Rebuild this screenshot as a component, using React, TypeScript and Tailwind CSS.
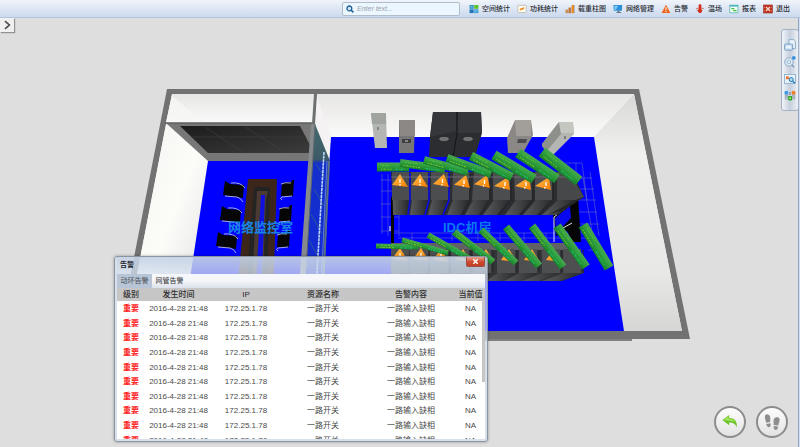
import type { ReactNode } from "react";

type Pt = [number, number];

/* ---------- toolbar icons ---------- */

const SpaceIcon = () => (
  <svg viewBox="0 0 10 10" className="size-[10px]" aria-hidden="true">
    <rect x="0.5" y="1" width="4.2" height="3.8" fill="#2d8fc0" />
    <rect x="5.2" y="1" width="4.2" height="3.8" fill="#5cc22c" />
    <rect x="0.5" y="5.3" width="4.2" height="3.8" fill="#2577b8" />
    <rect x="5.2" y="5.3" width="4.2" height="3.8" fill="#3d9bd0" />
    <rect x="1.5" y="2" width="2" height="1.6" fill="#6fc4d8" />
    <rect x="6.2" y="6.3" width="2" height="1.6" fill="#74c4e8" />
  </svg>
);

const PowerIcon = () => (
  <svg viewBox="0 0 10 10" className="size-[10px]" aria-hidden="true">
    <rect x="0.8" y="1.3" width="8.4" height="7.2" rx="0.8" fill="#fffdf4" stroke="#b9b7a8" strokeWidth="0.8" />
    <path d="M2.8 6.2 4.4 4.6 5.2 5.4 7.2 3.6" fill="none" stroke="#f08a1c" strokeWidth="1.3" />
  </svg>
);

const BarsIcon = () => (
  <svg viewBox="0 0 10 10" className="size-[10px]" aria-hidden="true">
    <rect x="0.5" y="5.6" width="2.3" height="3.6" fill="#d98a3c" />
    <rect x="3.5" y="3.6" width="2.4" height="5.6" fill="#c9742c" />
    <rect x="6.6" y="1" width="2.5" height="8.2" fill="#f08a1c" />
    <path d="M2.8 5.6v3.6M5.9 3.6v5.6M9.2 1v8.2" stroke="#7f8a96" strokeWidth="0.6" />
  </svg>
);

const MonitorIcon = () => (
  <svg viewBox="0 0 10 10" className="size-[10px]" aria-hidden="true">
    <path d="M0.4 1h8.8l-0.4 5.8H0.8z" fill="#2a8fd8" />
    <path d="M1.2 1.7h4L2.8 6H1.5z" fill="#7cc8f4" />
    <path d="M4.4 6.8h2.2v1.3h1.6v1H3.4v-1h1z" fill="#6d7c8c" />
  </svg>
);

const AlarmIcon = () => (
  <svg viewBox="0 0 10 10" className="size-[10px]" aria-hidden="true">
    <path d="M5 0.8 9.4 9H0.6z" fill="#f0641c" />
    <path d="M5 3.2v3.2M5 7.2v1" stroke="#fff" strokeWidth="1" />
  </svg>
);

const HeatIcon = () => (
  <svg viewBox="0 0 10 10" className="size-[10px]" aria-hidden="true">
    <path d="M3.6 1.6a1.4 1.4 0 0 1 2.8 0v3.4a2.2 2.2 0 1 1-2.8 0z" fill="#d2301c" />
    <path d="M1.2 4.4h2M6.8 4.4h2M1.8 6.4h1.4" stroke="#b4552c" strokeWidth="0.8" />
  </svg>
);

const ReportIcon = () => (
  <svg viewBox="0 0 10 10" className="size-[10px]" aria-hidden="true">
    <rect x="0.8" y="1.2" width="8.2" height="7.6" fill="#f4fcf6" stroke="#58b8ae" strokeWidth="0.8" />
    <rect x="0.8" y="1" width="8.2" height="1.6" fill="#4bb4c4" />
    <path d="M2.4 4.6h3M4.2 6.6h3.4" stroke="#42b83c" strokeWidth="1.2" />
  </svg>
);

const ExitIcon = () => (
  <svg viewBox="0 0 10 10" className="size-[10px]" aria-hidden="true">
    <rect x="0.6" y="1" width="8.8" height="8" fill="#c03420" stroke="#8f2a1c" strokeWidth="0.6" />
    <path d="m3 3 4 4M7 3 3 7" stroke="#fbe0d8" strokeWidth="1.1" />
    <path d="M1 3.4h1M8 3.4h1M1 6.6h1M8 6.6h1" stroke="#e88a74" strokeWidth="0.7" />
  </svg>
);

const tools: { label: string; icon: ReactNode }[] = [
  { label: "空间统计", icon: <SpaceIcon /> },
  { label: "功耗统计", icon: <PowerIcon /> },
  { label: "载重柱图", icon: <BarsIcon /> },
  { label: "网络管理", icon: <MonitorIcon /> },
  { label: "告警", icon: <AlarmIcon /> },
  { label: "温场", icon: <HeatIcon /> },
  { label: "报表", icon: <ReportIcon /> },
  { label: "退出", icon: <ExitIcon /> },
];

function TopBar() {
  return (
    <header className="relative flex h-[18px] items-center justify-end gap-[9px] border-b border-[#b4c3dc] bg-linear-to-b from-[#f0f4fb] via-[#e0e8f4] via-45% to-[#cbd9ee] pr-[10px]">
      <label className="flex h-[14px] w-[118px] items-center gap-[3px] rounded-[2px] border border-[#b3bccb] bg-[#ecf6fe] px-[3px]">
        <svg viewBox="0 0 8 8" className="size-2 shrink-0" aria-hidden="true">
          <circle cx="3.4" cy="3.4" r="2.4" fill="#d4ecfa" stroke="#1c5c94" strokeWidth="1.3" />
          <path d="m5.2 5.2 2.2 2.2" stroke="#1c5c94" strokeWidth="1.5" />
        </svg>
        <input
          type="text"
          aria-label="Search"
          placeholder="Enter text..."
          className="min-w-0 flex-1 bg-transparent text-[7px] leading-[10px] italic outline-none placeholder:text-[#9aa2ac]"
        />
      </label>
      <nav className="flex items-center gap-[7px]">
        {tools.map((t) => (
          <button key={t.label} type="button" className="flex items-center gap-[3px] text-[7px] leading-[10px] font-medium whitespace-nowrap text-[#2b2f36]">
            {t.icon}
            {t.label}
          </button>
        ))}
      </nav>
    </header>
  );
}

/* ---------- 3D room ---------- */

const rackBack = [392, 411, 431, 453, 474, 493, 514, 535, 557];
const rackMid = [392, 411, 431, 452, 472, 493, 515, 535, 557];
const rackFoot = [393, 410, 428, 447, 465, 483, 505, 523, 542];
const lowerMid = [392, 411, 431, 452, 474, 498, 520, 543, 564];
const lowerFoot = [392, 408, 426, 445, 466, 486, 504, 522, 542];

const warnings: Pt[] = [[400, 181], [420, 181], [441, 181], [462, 182], [482, 182], [502, 184], [523, 184], [543, 184]];
const lowerWarnings: Pt[] = [[400, 255], [421, 255], [441, 256], [463, 256], [486, 256], [509, 256], [532, 256], [554, 256]];

type SignShape = { a: Pt; b: Pt; w: number };

const upperSigns: SignShape[] = [
  { a: [377, 167], b: [409, 167], w: 9 },
  { a: [400, 163], b: [445, 169], w: 8 },
  { a: [424, 160], b: [468, 172], w: 8 },
  { a: [447, 158], b: [491, 174], w: 8 },
  { a: [471, 156], b: [512, 177], w: 9 },
  { a: [494, 155], b: [534, 179], w: 10 },
  { a: [518, 153], b: [557, 179], w: 10 },
  { a: [542, 152], b: [579, 181], w: 11 },
];

const lowerSigns: SignShape[] = [
  { a: [376, 246], b: [418, 247], w: 5 },
  { a: [402, 240], b: [448, 253], w: 5 },
  { a: [428, 235], b: [470, 259], w: 6 },
  { a: [454, 232], b: [493, 262], w: 7 },
  { a: [481, 230], b: [516, 263], w: 7 },
  { a: [506, 227], b: [539, 266], w: 8 },
  { a: [532, 226], b: [563, 267], w: 8 },
  { a: [557, 226], b: [586, 267], w: 9 },
  { a: [583, 225], b: [609, 268], w: 10 },
];

function Sign({ a, b, w }: SignShape) {
  const len = Math.hypot(b[0] - a[0], b[1] - a[1]);
  const angle = (Math.atan2(b[1] - a[1], b[0] - a[0]) * 180) / Math.PI;
  return (
    <g transform={`translate(${a[0]} ${a[1]}) rotate(${angle})`}>
      <rect x="0" y={-w / 2} width={len} height={w} fill="url(#sign)" />
      <path d={`M5 ${-w / 6}H${len * 0.4}`} stroke="#7ed62e" strokeWidth="0.7" strokeDasharray="2 1 3 1" opacity="0.7" />
      <path d={`M4 ${w / 4}H${len * 0.45}`} stroke="#b4e030" strokeWidth="0.8" strokeDasharray="1.5 1 2.5 1" opacity="0.8" />
      <path d={`M${len * 0.6} ${-w / 6}H${len - 6}`} stroke="#22c474" strokeWidth="0.7" strokeDasharray="2 1" opacity="0.7" />
      <path d={`M${len * 0.58} ${w / 4}H${len - 5}`} stroke="#24d890" strokeWidth="1" strokeDasharray="2 1 1 1" opacity="0.85" />
    </g>
  );
}

function Warning({ at: [x, y], tilt }: { at: Pt; tilt: number }) {
  return (
    <g>
      <path d={`M${x + tilt} ${y - 7}L${x + 8} ${y + 6}L${x - 8} ${y + 4 - tilt / 3}z`} fill="url(#warn)" />
      <path d={`M${x + tilt * 0.5} ${y - 2}v4M${x + tilt * 0.3} ${y + 3}v1.4`} stroke="#fff" strokeWidth="1.3" />
    </g>
  );
}

const leftChairs: Pt[] = [[223, 182], [220, 207], [216, 233]];
const rightChairs: Pt[] = [[281, 182], [279, 207], [277, 233]];

function Room() {
  return (
    <svg viewBox="0 0 800 447" preserveAspectRatio="xMidYMin meet" className="absolute inset-0 h-full w-full" role="img" aria-label="3D 机房">
      <defs>
        <linearGradient id="sign" x1="0" y1="0" x2="0" y2="1">
          <stop offset="0" stopColor="#48a850" />
          <stop offset="0.5" stopColor="#2c9c3a" />
          <stop offset="1" stopColor="#16802a" />
        </linearGradient>
        <linearGradient id="warn" x1="0" y1="0" x2="1" y2="1">
          <stop offset="0" stopColor="#ffc050" />
          <stop offset="1" stopColor="#f57c00" />
        </linearGradient>
        <linearGradient id="wallTop" x1="0" y1="0" x2="0" y2="1">
          <stop offset="0" stopColor="#e6e6e4" />
          <stop offset="1" stopColor="#fbfafa" />
        </linearGradient>
        <linearGradient id="wallLeft" x1="0" y1="0" x2="1" y2="1">
          <stop offset="0" stopColor="#f2f2f0" />
          <stop offset="0.5" stopColor="#fcfcf9" />
          <stop offset="1" stopColor="#dcdcdc" />
        </linearGradient>
        <linearGradient id="wallRight" x1="0" y1="0" x2="0" y2="1">
          <stop offset="0" stopColor="#d8d8d6" />
          <stop offset="0.25" stopColor="#f0f0ee" />
          <stop offset="0.75" stopColor="#e8e8e6" />
          <stop offset="1" stopColor="#d6d6d4" />
        </linearGradient>
        <linearGradient id="ceiling" x1="0" y1="0" x2="1" y2="1">
          <stop offset="0" stopColor="#1c1c1c" />
          <stop offset="1" stopColor="#3c3c3c" />
        </linearGradient>
        <linearGradient id="front" x1="0" y1="0" x2="1" y2="0">
          <stop offset="0" stopColor="#5a5c5c" />
          <stop offset="1" stopColor="#2a2c2e" />
        </linearGradient>
        <linearGradient id="glass" x1="0" y1="0" x2="0" y2="1">
          <stop offset="0" stopColor="#456a70" />
          <stop offset="0.17" stopColor="#3c5a66" />
          <stop offset="0.19" stopColor="#1430cc" />
          <stop offset="1" stopColor="#1226d6" />
        </linearGradient>
      </defs>

      {/* outer walls */}
      <path d="M450 338h182v3H450z" fill="#808080" />
      <path d="M167 89H639L690 339H118z" fill="#727272" />
      <path d="M172 94H634L682 331H126z" fill="#f2f2f0" />
      <path d="M172 94H315L313 123H166z" fill="url(#wallTop)" />
      <path d="M172 96 204 122H166z" fill="#f6f6f4" opacity="0.8" />
      <path d="M316 94H634L594 137H331z" fill="url(#wallTop)" />
      <path d="M316 94 331 137 330 161 315 124z" fill="#f4f2f2" />
      <path d="M634 94 682 331H624L594 137z" fill="url(#wallRight)" />
      <path d="M166 124 208 161 182 331H126z" fill="url(#wallLeft)" />

      {/* floors */}
      <path d="M208 161H312L300 331H182z" fill="#0000ff" />
      <path d="M331 137H594L624 331H318z" fill="#0000ff" />

      {/* meeting room roof */}
      <path d="M166 123H313L310 161H208z" fill="#777" />
      <path d="M180 126H300L310 145V153H208z" fill="url(#ceiling)" />
      <path d="M205 127 243 152M245 127 284 152M192 137H304" stroke="#444" strokeWidth="0.5" />
      <path d="M165 123H314" stroke="#5c6160" strokeWidth="1.6" />

      {/* glass partition */}
      <path d="M315 124 330 161 322 331H300z" fill="url(#glass)" />
      <path d="M316 164 325 178M314 189 324 206M311 214 322 234M309 240 320 260" stroke="#2f6f80" strokeWidth="0.7" />
      <path d="M324 152 316 290" stroke="#bcd6f6" strokeWidth="1.6" strokeDasharray="3 0.6" />
      <path d="M329 161 321 331" stroke="#5b7180" strokeWidth="2" />
      <path d="M327 161 319 331" stroke="#9ab4d8" strokeWidth="0.6" />
      <path d="M314 94H317L315 124H312z" fill="#6e706f" />
      <path d="M311 124H315L304 300H298z" fill="#868a8c" />
      <path d="M315 124 306 270" stroke="#5e686c" strokeWidth="1" />

      {/* meeting table and chairs */}
      <path d="M248 179H277L273 300H236z" fill="#3c261c" />
      <path d="M254 187H270L266 300H245z" fill="#242424" />
      <path d="M257 191H268L266 200 262 300H251z" fill="#4a3a32" />
      <path d="M261 195H265L261 300H255z" fill="#1010e0" />
      {leftChairs.map(([x, y]) => (
        <g key={`l${y}`}>
          <path d={`M${x + 2} ${y - 1} ${x + 7} ${y + 2} ${x + 21} ${y + 3} ${x + 20} ${y + 16} ${x} ${y + 13}z`} fill="#060606" />
          <path d={`M${x + 8} ${y + 1}q10-1 14 5M${x + 2} ${y + 14}l12 1q4 1 6 5`} fill="none" stroke="#b8bcd8" strokeWidth="0.9" />
        </g>
      ))}
      {rightChairs.map(([x, y]) => (
        <g key={`r${y}`}>
          <path d={`M${x + 1} ${y + 1} ${x + 10} ${y} ${x + 11} ${y - 2} ${x + 13} ${y - 2} ${x + 12} ${y + 14} ${x} ${y + 14}z`} fill="#060606" />
          <path d={`M${x} ${y + 2}q4-2 10-1M${x + 11} ${y + 14}l-10 1q-3 1 0 3`} fill="none" stroke="#b8bcd8" strokeWidth="0.9" />
        </g>
      ))}

      {/* cabinets along the back wall */}
      <path d="M371 113H386L387 148H375z" fill="#b4b6b4" />
      <path d="M371 113H386V124H372z" fill="#a0a49e" />
      <path d="M378 127v3" stroke="#666" strokeWidth="1.2" />
      <path d="M399 120H415L414 153H399z" fill="#767676" />
      <path d="M399 120H415V136H400z" fill="#8c8886" />
      <path d="M402 139h9v4h-9z" fill="#3e3e42" />
      <path d="M405 141h3" stroke="#c8ccd4" strokeWidth="1" />
      <path d="M433 112H481L482 133 475 157H429L430 137z" fill="#2c2d30" />
      <path d="M433 112H456V131L430 137zM458 112H481L482 133 457 133z" fill="#36373a" />
      <path d="M457 112V134L453 157" stroke="#141416" strokeWidth="1" fill="none" />
      <ellipse cx="444" cy="139" rx="4.5" ry="1.4" fill="#666" stroke="#aaa" strokeWidth="0.6" />
      <ellipse cx="468" cy="139" rx="4.5" ry="1.4" fill="#666" stroke="#aaa" strokeWidth="0.6" />
      <path d="M515 120H531L533 135 523 153H508L507 138z" fill="#8a8784" />
      <path d="M515 120H531V136H516z" fill="#a29e9a" />
      <path d="M518 139h9l-1 4h-9z" fill="#4c4c50" />
      <path d="M559 122H573L574 134 552 156 542 146V144z" fill="#b4b6b2" />
      <path d="M559 122 561 134 546 152 542 146V144z" fill="#8e908c" />
      <path d="M559 122H573L574 133H561z" fill="#c4c6c0" />
      <path d="M565 136v3" stroke="#555" strokeWidth="1.2" />

      {/* cable trays */}
      <g stroke="#8088b0" strokeWidth="0.6" fill="none" opacity="0.75">
        <path d="M382 174V234M388 174V236M399 180V236M381 180H399M381 191H399M381 204H399M381 217H399M381 231H399" />
        <path d="M394 233H585M398 238H588M566 163H582M576 163V200M582 163 587 200M590 172 599 236M583 178 592 232M574 178H592M574 189H594M576 200H596M578 212H597M580 224H599M588 250H594M412 233v8M430 233v8M452 233v8M478 233v8M500 233v8M524 233v8M546 233v8M568 233v8" />
      </g>

      {/* doors of the cold aisle */}
      <path d="M391 197h3v46h-3z" fill="#050505" />
      <path d="M390 226v5" stroke="#fff" strokeWidth="1" />
      <path d="M553 215 578 197 581 242H573L567 231 556 236z" fill="#050505" />
      <path d="M555 218 570 206 571 218 556 234z" fill="#0808f0" />
      <path d="M554 242V217L570 205M563 228 572 223" stroke="#dfe4f4" strokeWidth="1" fill="none" />

      {/* upper rack row */}
      <path d="M391 172H572L584 197 545 215H393z" fill="#2b2d30" />
      {rackBack.map((x, i) => (
        <g key={x}>
          <path d={`M${x} 172h17L${rackMid[i] + 17} 200H${rackMid[i]}z`} fill="#4b4d4f" />
          <path d={`M${rackMid[i] + 1} 200h15L${rackFoot[i] + 14} 215H${rackFoot[i]}z`} fill="url(#front)" />
          <path d={`M${rackMid[i] + 18} 173V200L${rackFoot[i] + 15} 215`} stroke={i < 3 ? "#0a0ae8" : "#26282b"} strokeWidth="1.6" fill="none" />
        </g>
      ))}
      <path d="M557 175H571L584 197 576 200H557z" fill="#46484a" />
      <path d="M576 200 584 197 566 209 548 215z" fill="#232527" />
      <path d="M391 177H572" stroke="#7e8088" strokeWidth="1" opacity="0.7" />
      {warnings.map((p, i) => (
        <Warning key={p[0]} at={p} tilt={i < 2 ? 0 : Math.min(i + 1, 6)} />
      ))}
      {upperSigns.map((s) => (
        <Sign key={s.a[0]} {...s} />
      ))}

      <text x="228" y="232" fontSize="13" fontWeight="700" fill="#1784e6">网络监控室</text>
      <text x="443" y="232" fontSize="13" fontWeight="700" fill="#0a78ee">IDC机房</text>

      {/* lower rack row */}
      <path d="M391 243H574L584 273 562 281H391z" fill="#333538" />
      <path d="M391 243H574L578 250H391z" fill="#606266" />
      {lowerMid.map((x, i) => (
        <g key={x}>
          <path d={`M${x - 1} 249h18V273h-18z`} fill="#4d4f51" />
          <path d={`M${x} 273h17L${lowerFoot[i] + 17} 281H${lowerFoot[i]}z`} fill="url(#front)" />
          <path d={`M${x + 19} 250V272`} stroke="#26282b" strokeWidth="1.2" />
        </g>
      ))}
      {lowerWarnings.map((p) => (
        <Warning key={p[0]} at={p} tilt={0} />
      ))}
      {lowerSigns.map((s) => (
        <Sign key={s.a[0]} {...s} />
      ))}
    </svg>
  );
}

/* ---------- alarm window ---------- */

const columns = ["级别", "发生时间", "IP", "资源名称", "告警内容", "当前值"];
const alarms = Array.from({ length: 10 }, () => ["重要", "2016-4-28 21:48", "172.25.1.78", "一路开关", "一路输入缺相", "NA"]);

function AlarmWindow() {
  return (
    <section
      aria-label="告警"
      className="absolute top-[256px] left-[114px] flex w-[374px] flex-col rounded-[3px] border border-[#8b95a2] bg-[#d6e0ef]/75 px-[2px] pb-[2px] shadow-[0_0_3px_rgba(0,0,0,0.35)]"
    >
      <div className="flex h-[17px] items-start justify-between bg-linear-to-b from-[#c0cee2]/70 to-transparent">
        <h2 className="pl-[3px] text-[7px] leading-[15px] font-bold text-[#20242c]">告警</h2>
        <button
          type="button"
          aria-label="关闭"
          className="flex h-[10px] w-[19px] items-center justify-center rounded-b-[2px] border border-t-0 border-[#9c5048] bg-linear-to-b from-[#e6a394] via-[#cf4c30] via-50% to-[#c03c22]"
        >
          <svg viewBox="0 0 8 8" className="size-[7px]" aria-hidden="true">
            <path d="m1.5 1.5 5 5M6.5 1.5l-5 5" stroke="#fff" strokeWidth="1.7" />
          </svg>
        </button>
      </div>
      <div role="tablist" className="flex h-[14px] bg-linear-to-b from-[#f6f7fa] from-45% to-[#dde1ec] text-[7px] leading-[12px] text-[#4a4e55]">
        <button type="button" role="tab" aria-selected="true" className="w-[35px] bg-[#b7c5d6]">
          动环告警
        </button>
        <button type="button" role="tab" aria-selected="false" className="w-[35px] text-[#2f3237]">
          网管告警
        </button>
      </div>
      <div className="relative h-[151px] overflow-hidden bg-white">
        <table className="h-[159px] w-full table-fixed border-collapse text-center text-[8px] leading-[12px] whitespace-nowrap text-[#4a4a4a]">
          <colgroup>
            <col className="w-[28px]" />
            <col className="w-[67px]" />
            <col className="w-[68px]" />
            <col className="w-[86px]" />
            <col className="w-[90px]" />
            <col />
          </colgroup>
          <thead>
            <tr className="h-[13px] bg-[#c6c6c6] text-[#2e2e2e]">
              {columns.map((c) => (
                <th key={c} scope="col" className="p-0 font-medium">
                  {c}
                </th>
              ))}
            </tr>
          </thead>
          <tbody>
            {alarms.map((row, i) => (
              <tr key={i}>
                {row.map((cell, j) => (
                  <td key={j} className={j === 0 ? "p-0 pt-[2px] font-bold text-[#ff1a1a]" : "p-0 pt-[2px]"}>
                    {cell}
                  </td>
                ))}
              </tr>
            ))}
          </tbody>
        </table>
        <div className="absolute top-[12px] right-0 h-[82px] w-[3px] bg-[#c6c6c6]" />
      </div>
    </section>
  );
}

/* ---------- side tools ---------- */

function SideTools() {
  const button = "size-3";
  return (
    <aside className="absolute top-[29px] right-[1px] flex h-[82px] w-[18px] flex-col items-center justify-center gap-[5px] rounded-[3px] border border-[#a3b1c4] bg-linear-to-r from-[#f2f5fa] via-[#c6cfdd] to-[#eef1f6]">
      <button type="button" aria-label="复位" className={button}>
        <svg viewBox="0 0 12 12" aria-hidden="true">
          <path d="M5 0.6h5l1.4 2v7H5z" fill="#e8f2fa" stroke="#7ea2c2" strokeWidth="0.8" />
          <rect x="0.6" y="5" width="8" height="6.2" rx="0.8" fill="#c4dcf0" stroke="#6e94b8" strokeWidth="0.8" />
          <rect x="2.2" y="6.8" width="4.8" height="2.6" fill="#eef6fc" />
        </svg>
      </button>
      <button type="button" aria-label="缩放" className={button}>
        <svg viewBox="0 0 12 12" aria-hidden="true">
          <circle cx="5" cy="6" r="4.2" fill="#dcebf6" stroke="#8fabc4" strokeWidth="1" />
          <circle cx="5" cy="6" r="1.8" fill="none" stroke="#93b0c8" strokeWidth="0.8" />
          <path d="m7.8 8.8 2.4 2.6" stroke="#7c9ab6" strokeWidth="1.4" />
          <circle cx="9.8" cy="1.9" r="1.8" fill="#2f8fe0" />
        </svg>
      </button>
      <button type="button" aria-label="查找" className={button}>
        <svg viewBox="0 0 12 12" aria-hidden="true">
          <rect x="0.5" y="1.4" width="11" height="9" fill="#e4f0fa" stroke="#88a8c8" strokeWidth="0.8" />
          <rect x="2" y="3.4" width="2.8" height="2.8" fill="#f07020" />
          <circle cx="7.2" cy="6.6" r="2" fill="#b4dcf4" stroke="#1c74ac" strokeWidth="1" />
          <path d="m8.8 8.2 2 2" stroke="#1c74ac" strokeWidth="1.3" />
        </svg>
      </button>
      <button type="button" aria-label="布局" className={button}>
        <svg viewBox="0 0 12 12" aria-hidden="true">
          <path d="M0.8 4h3.4v5.6H0.8zM8 4h3.2v5.6H8z" fill="#a8b4c2" />
          <circle cx="2.4" cy="2.8" r="2" fill="#3c9ce8" />
          <circle cx="9.6" cy="2.8" r="2" fill="#f08024" />
          <rect x="4.2" y="6" width="3.8" height="4.4" fill="#2fa81c" />
          <path d="M6 2v3" stroke="#62707e" strokeWidth="1" />
          <path d="M5.2 8.2h1.8" stroke="#d8f8c8" strokeWidth="1.2" />
        </svg>
      </button>
    </aside>
  );
}

function RoundButtons() {
  const button =
    "flex size-8 items-center justify-center rounded-full border-2 border-[#8c8c8c] bg-linear-to-b from-[#fdfdfd] to-[#e2e2e2]";
  return (
    <div className="absolute right-[12px] bottom-[9px] flex gap-[10px]">
      <button type="button" aria-label="返回" className={button}>
        <svg viewBox="0 0 18 18" className="size-[18px]" aria-hidden="true">
          <path d="M1.4 7 8.2 2v3c5 0 8.2 3 7.6 9.4C14.6 11 12.4 9.4 8.2 9.4v2.8z" fill="#6cc42c" />
          <path d="M2.6 6.8 7.4 3.4v2.4c3 0 5.4 1 7 3.4-2-1-4-1.6-7-1.4z" fill="#a4e45c" />
        </svg>
      </button>
      <button type="button" aria-label="漫游" className={button}>
        <svg viewBox="0 0 18 18" className="size-[18px]" fill="#8e8e8e" aria-hidden="true">
          <path d="M2.4 1.8C4 0.6 6.6 1.2 7.2 4c0.4 2-0.2 3.4 0 5L3.2 9.8C2.8 7.6 1 4.2 2.4 1.8zM3.2 11l4.2-0.8c0.8 2 0 3.8-1.4 4-1.6 0-2.4-1.4-2.8-3.2z" />
          <path d="M11.2 5.6c1.6-2 4.8-1.8 5.4 0.6 0.4 2-1 4-1.4 6.2l-4.4-0.4c0-2-0.8-4.4 0.4-6.4zM10.6 13l4.4 0.6c0 2.2-1 3.6-2.4 3.4-1.4-0.2-2.2-2-2-4z" />
        </svg>
      </button>
    </div>
  );
}

export default function App() {
  return (
    <div className="relative flex min-h-screen flex-col overflow-hidden bg-[#dedede] font-['Liberation_Sans','Noto_Sans_CJK_SC',sans-serif]">
      <Room />
      <TopBar />
      <main className="flex flex-1 items-start justify-between">
        <button
          type="button"
          aria-label="展开"
          className="relative flex size-[14px] items-center justify-center bg-[#f0f0f0] shadow-[1px_1px_1px_rgba(0,0,0,0.35)]"
        >
          <svg viewBox="0 0 10 10" className="size-[10px]" aria-hidden="true">
            <path d="m3 1.2 4.4 3.8L3 8.8" fill="none" stroke="#4a4a4a" strokeWidth="1.6" />
          </svg>
        </button>
        <div className="relative w-[2px] self-stretch border-l border-[#8ea6c8] bg-[#d3dff0]" />
      </main>
      <AlarmWindow />
      <SideTools />
      <RoundButtons />
    </div>
  );
}
